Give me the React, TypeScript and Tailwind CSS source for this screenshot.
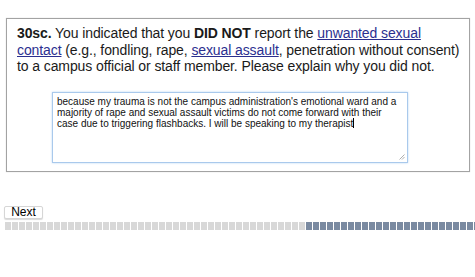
import React from "react";

export default function App() {
  const grey = Array.from({ length: 43 });
  const blue = Array.from({ length: 26 });
  return (
    <div className="w-[475px] h-[277px] bg-white overflow-hidden" style={{ fontFamily: '"Liberation Sans", Arial, sans-serif' }}>
      <div className="pt-[18px] pl-[6px]">
        <div className="w-[464px] h-[154px] border border-[#a3a3a3] shadow-[0_0_1px_rgba(0,0,0,0.2)] pl-[10px] pr-[4px] pt-[6px]">
          <p className="text-[14px] tracking-[-0.1px] leading-[16.5px] text-[#1a1a1a] whitespace-nowrap">
            <b>30sc.</b> You indicated that you <b>DID NOT</b> report the{" "}
            <span className="text-[#2b2f8f] underline">unwanted sexual</span>
            <br />
            <span className="text-[#2b2f8f] underline">contact</span> (e.g., fondling, rape,{" "}
            <span className="text-[#2b2f8f] underline">sexual assault</span>, penetration without consent)
            <br />
            to a campus official or staff member. Please explain why you did not.
          </p>
          <div className="pl-[35px] pt-[17px]">
            <div className="relative w-[356px] h-[71px] border border-[#a9c9ec] shadow-[0_0_2px_#b9d6f3] bg-white px-[4px] pt-[3px]">
              <div className="text-[10px] leading-[11px] text-[#111] whitespace-nowrap">
                because my trauma is not the campus administration's emotional ward and a
                <br />
                majority of rape and sexual assault victims do not come forward with their
                <br />
                case due to triggering flashbacks. I will be speaking to my therapist<span className="inline-block w-[1px] h-[10px] bg-black align-[-1px]"></span>
              </div>
              <svg className="absolute right-[2px] bottom-[2px]" width="6" height="6" viewBox="0 0 6 6">
                <path d="M5.5 0.5 L0.5 5.5 M5.5 3 L3 5.5" stroke="#999" strokeWidth="0.8" />
              </svg>
            </div>
          </div>
        </div>
      </div>
      <div className="pl-[4px] pt-[34px]">
        <button className="w-[39px] h-[13px] rounded-[2px] border border-[#d6d6d6] bg-white shadow-[0_1px_1px_rgba(0,0,0,0.15)] text-[12px] leading-[11px] text-black flex items-center justify-center">
          Next
        </button>
      </div>
      <div className="pl-[5px] pt-[3px] flex gap-[1px]">
        {grey.map((_, i) => (
          <div key={"g" + i} className="w-[6px] h-[8px] shrink-0 bg-[#d8d8d8]" />
        ))}
        {blue.map((_, i) => (
          <div key={"b" + i} className="w-[6px] h-[8px] shrink-0 bg-[#7a8aa1]" />
        ))}
      </div>
    </div>
  );
}
